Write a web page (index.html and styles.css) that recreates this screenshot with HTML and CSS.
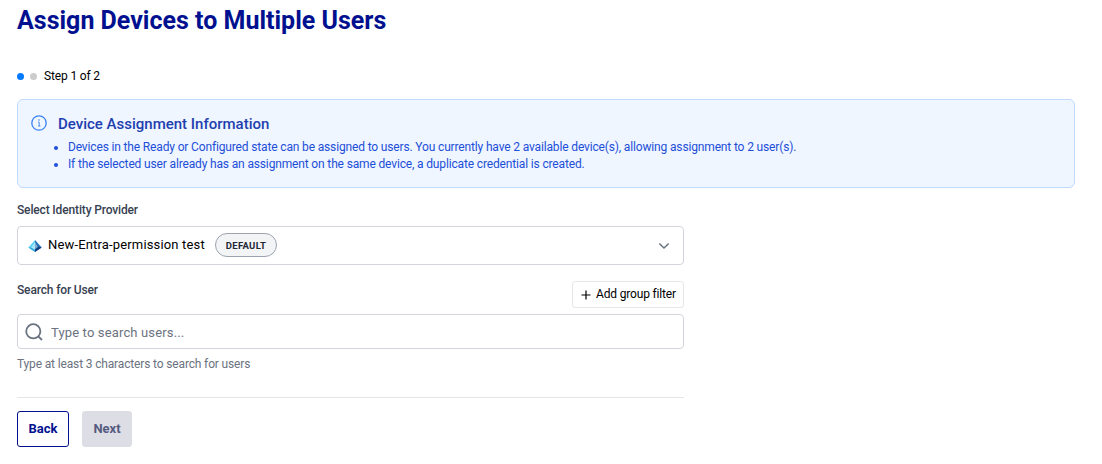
FILE: index.html
```html
<!DOCTYPE html>
<html lang="en">
<head>
  <meta charset="UTF-8">
  <meta name="viewport" content="width=device-width, initial-scale=1.0">
  <title>Assign Devices to Multiple Users</title>
  <link rel="stylesheet" href="styles.css">
</head>
<body>
  <main class="page">
    <h1>Assign Devices to Multiple Users</h1>

    <div class="steps">
      <span class="dot active"></span>
      <span class="dot"></span>
      <span class="step-text">Step 1 of 2</span>
    </div>

    <!-- Info box -->
    <section class="info">
      <svg class="info-icon" width="16" height="16" viewBox="0 0 16 16" fill="none" stroke="currentColor">
        <circle cx="8" cy="8" r="7.2" stroke-width="1.3"/>
        <path d="M7 7.2H8.2V11M7 11H9.4" stroke-width="0.9"/>
        <circle cx="8" cy="5" r="0.8" fill="currentColor" stroke="none"/>
      </svg>
      <div class="info-body">
        <h2>Device Assignment Information</h2>
        <ul>
          <li>Devices in the Ready or Configured state can be assigned to users. You currently have 2 available device(s), allowing assignment to 2 user(s).</li>
          <li>If the selected user already has an assignment on the same device, a duplicate credential is created.</li>
        </ul>
      </div>
    </section>

    <div class="form">
      <!-- Identity provider -->
      <div class="label">Select Identity Provider</div>
      <div class="select">
        <svg class="entra" width="14" height="12" viewBox="0 0 14 12">
          <path d="M7 0L0.3 7.5L7 11.8Z" fill="#5fd3f7"/>
          <path d="M7 0L13.7 7.5L7 11.8Z" fill="#2572b4"/>
          <path d="M7 2L3 8L7 10Z" fill="#a5e6fa"/>
          <path d="M7 2L10 7.6L7 10Z" fill="#7fabd0"/>
          <path d="M7 9.2L10.4 6.8L13.7 7.5L7 12Z" fill="#123f80"/>
          <path d="M0.3 7.5L3 7.6L7 9.8V12Z" fill="#36a9dd"/>
        </svg>
        <span class="provider">New-Entra-permission test</span>
        <span class="badge">DEFAULT</span>
        <svg class="chevron" width="12" height="8" viewBox="0 0 12 8" fill="none" stroke="currentColor" stroke-width="1.5">
          <path d="M1.3 1.5L6 6L10.7 1.5"/>
        </svg>
      </div>

      <!-- User search -->
      <div class="search-head">
        <label class="label" for="user-search">Search for User</label>
        <button class="filter-button" type="button">
          <svg width="10" height="10" viewBox="0 0 10 10" stroke="currentColor" stroke-width="1.2">
            <path d="M5 0.5V9.5M0.5 5H9.5"/>
          </svg>
          <span>Add group filter</span>
        </button>
      </div>
      <div class="search">
        <svg width="18" height="18" viewBox="0 0 18 18" fill="none" stroke="currentColor" stroke-width="1.8">
          <circle cx="8.3" cy="8.3" r="7.1"/>
          <path d="M13.3 13.3L17 17"/>
        </svg>
        <input id="user-search" type="text" placeholder="Type to search users...">
      </div>
      <p class="hint">Type at least 3 characters to search for users</p>

      <div class="actions">
        <button class="button back" type="button">Back</button>
        <button class="button next" type="button" disabled>Next</button>
      </div>
    </div>
  </main>
</body>
</html>
```
FILE: styles.css
```css
* {
  box-sizing: border-box;
  margin: 0;
  padding: 0;
}

body {
  font-family: Roboto, "Liberation Sans", sans-serif;
  font-size: 12px;
  letter-spacing: -0.15px;
  color: #000;
  background-color: #fff;
}

.page {
  padding: 5px 27px 0 17px;
}

h1 {
  font-size: 25px;
  line-height: 32px;
  font-weight: 700;
  letter-spacing: 0;
  color: #00108f;
}

.steps {
  display: flex;
  align-items: center;
  margin-top: 31px;
  height: 16px;
}

.dot {
  width: 7px;
  height: 7px;
  margin-right: 6px;
  border-radius: 50%;
  background-color: #ccc;
}

.dot.active {
  background-color: #007bff;
}

.step-text {
  margin-left: 1px;
}

.info {
  display: flex;
  height: 89px;
  margin-top: 15px;
  padding: 15px 13px;
  border: 1px solid #bfdbfe;
  border-radius: 6px;
  background-color: #eff6ff;
}

.info-icon {
  margin-right: 11px;
  color: #3b82f6;
}

.info h2 {
  font-size: 15px;
  line-height: 18px;
  font-weight: 500;
  letter-spacing: 0;
  color: #1e40af;
}

.info ul {
  margin-top: 6px;
  padding-left: 10px;
  color: #1d4ed8;
}

.info li {
  line-height: 17px;
}

.form {
  width: 667px;
  padding-top: 14px;
}

.label {
  line-height: 16px;
  font-weight: 500;
  color: #374151;
}

.select {
  display: flex;
  align-items: center;
  height: 39px;
  margin-top: 8px;
  padding: 0 13px 0 10px;
  border: 1px solid #d1d5db;
  border-radius: 4px;
}

.provider {
  margin-left: 6px;
  padding-bottom: 1px;
  font-size: 13px;
  line-height: 18px;
  letter-spacing: 0.16px;
}

.badge {
  height: 24px;
  margin-left: 10px;
  margin-bottom: 1px;
  padding: 0 10px;
  border: 1px solid #9ca3af;
  border-radius: 12px;
  background-color: #f3f4f6;
  color: #1f2937;
  font-size: 9.5px;
  line-height: 23px;
  font-weight: 700;
  letter-spacing: 0.27px;
}

.chevron {
  margin-left: auto;
  color: #6b7280;
}

.search-head {
  display: flex;
  justify-content: space-between;
  margin-top: 16px;
}

.search-head .label {
  padding-top: 1px;
}

.filter-button {
  display: flex;
  align-items: center;
  gap: 5px;
  width: 112px;
  height: 27px;
  padding-left: 8px;
  border: 1px solid #e5e7eb;
  border-radius: 3px;
  background-color: #fff;
  color: #000;
  font-family: inherit;
  font-size: 12px;
  letter-spacing: -0.17px;
  white-space: nowrap;
}

.filter-button span {
  padding-bottom: 2px;
}

.search {
  display: flex;
  align-items: center;
  height: 35px;
  margin-top: 6px;
  padding: 0 7px;
  border: 1px solid #d1d5db;
  border-radius: 4px;
  color: #6b7280;
}

.search input {
  flex: 1;
  margin-left: 8px;
  padding-top: 2px;
  border: none;
  outline: none;
  background: none;
  font-family: inherit;
  font-size: 13px;
  letter-spacing: 0.15px;
}

.search input::placeholder {
  color: #6b7280;
}

.hint {
  margin-top: 7px;
  line-height: 16px;
  color: #6b7280;
}

.actions {
  display: flex;
  gap: 13px;
  margin-top: 25px;
  padding-top: 13px;
  border-top: 1px solid #e5e7eb;
}

.button {
  height: 36px;
  padding-bottom: 2px;
  border: 1px solid #00108f;
  border-radius: 3px;
  font-family: inherit;
  font-size: 13px;
  font-weight: 700;
}

.back {
  width: 52px;
  background-color: #fff;
  color: #00108f;
}

.next {
  width: 50px;
  border-color: #dddde6;
  background-color: #dddde6;
  color: #555b80;
}
```
